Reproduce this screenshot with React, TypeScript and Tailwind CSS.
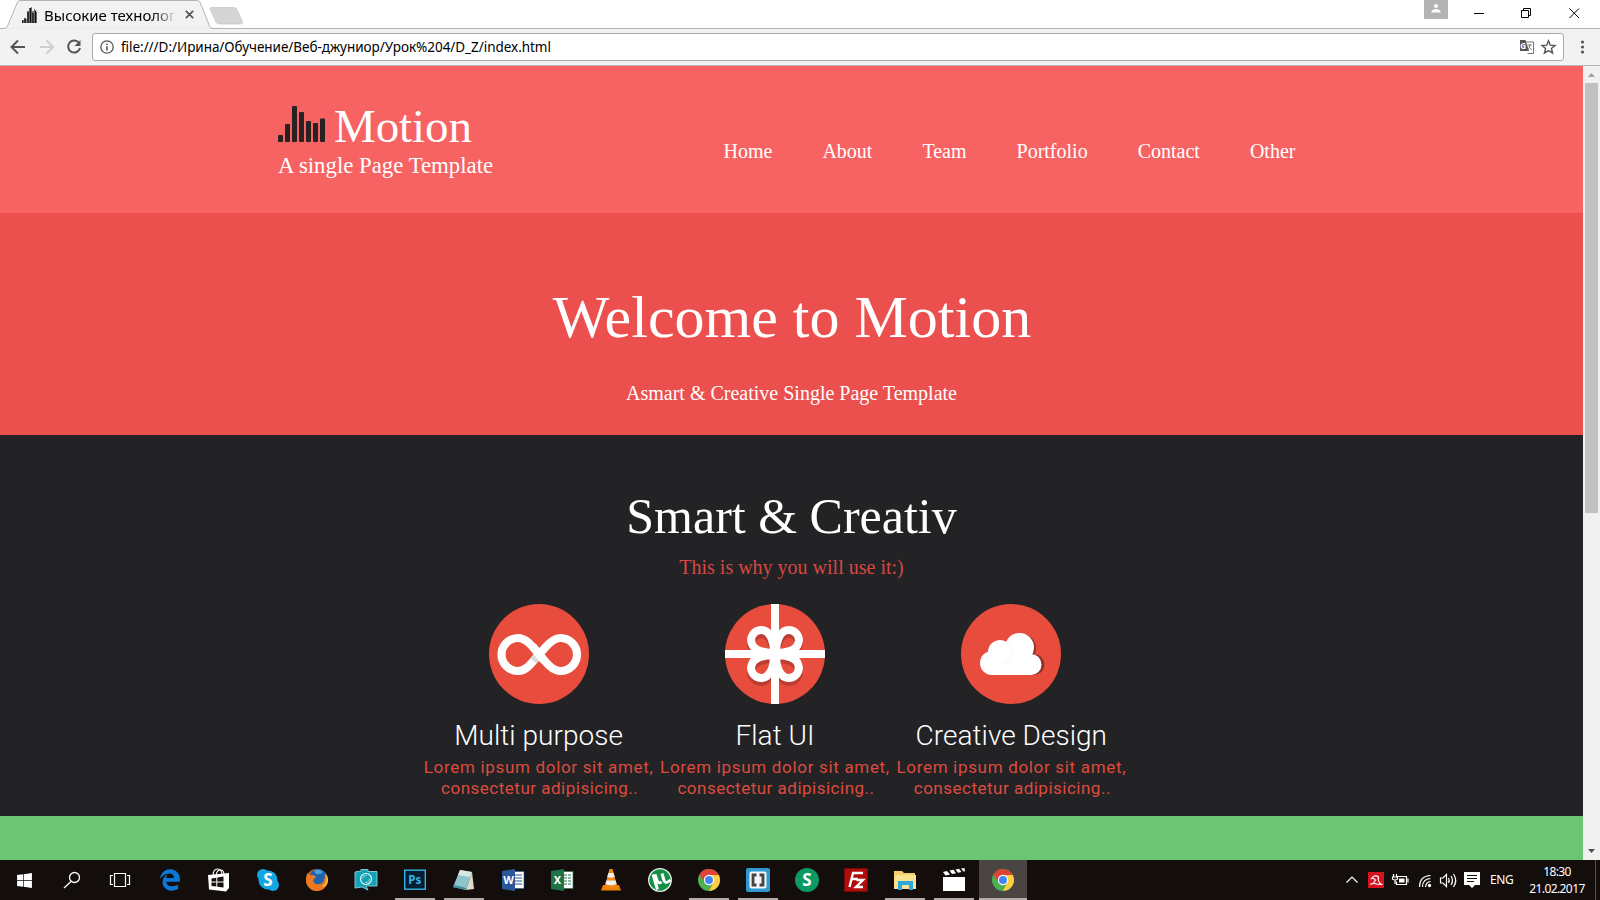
import type { ReactNode } from "react";
import { FaWindows, FaEdgeLegacy } from "react-icons/fa6";

const navItems = ["Home", "About", "Team", "Portfolio", "Contact", "Other"];

function Bars({ className, color }: { className: string; color: string }) {
  const bars = [
    [0, 29, 7],
    [7, 18, 18],
    [14, 0, 36],
    [21, 6, 30],
    [28, 15, 21],
    [35, 17, 19],
    [42, 12.5, 23.5],
  ];
  return (
    <svg className={className} viewBox="0 0 47 36" fill={color}>
      {bars.map(([x, y, h]) => (
        <rect key={x} x={x} y={y} width="5" height={h} rx="1" />
      ))}
    </svg>
  );
}

function Favicon() {
  return (
    <svg className="ml-[22px] h-[16px] w-[16px]" viewBox="0 0 16 16">
      <path d="M0 16V13H2V11H4V12H5V4H7V1H9V0H10V4H12V2H13V5H15V16Z" fill="#777" />
      <path d="M.5 16V13.500M3 16V11.500M6 16V5M8.500 16V1M11 16V6M13.500 16V3.500" stroke="#111" strokeWidth="1.300" />
    </svg>
  );
}

function Browser() {
  return (
    <div className="h-[66px] shrink-0 bg-[#f2f2f2] font-['Noto_Sans','Open_Sans',sans-serif] text-black">
      <div className="flex h-[29px] items-start justify-between border-b border-[#b4b4b4] bg-white">
        <div className="relative flex h-[29px] items-center">
          <svg className="absolute left-0 top-0 h-[29px] w-[250px]" viewBox="0 0 250 29">
            <path d="M0 28.5H5Q7 28 8 25L17.500 2Q18 .5 20 .5H197Q199 .5 200 2L209.500 26Q210.500 28.500 213 28.500" fill="#f2f2f2" stroke="#b4b4b4" />
            <path d="M6 29H211" stroke="#f2f2f2" strokeWidth="1.600" />
            <path d="M211 7.500H234Q236 7.500 237 9.500L242.500 22Q243 24 241 24H219Q217 24 216 22L210 9Q209.500 7.500 211 7.500Z" fill="#d5d5d5" stroke="#c4c4c4" strokeWidth=".7" />
          </svg>
          <div className="relative flex items-center">
            <Favicon />
            <span className="ml-[6px] w-[131px] overflow-hidden whitespace-nowrap bg-gradient-to-r from-black from-80% to-[#e4e4e4] bg-clip-text text-[15px] leading-[20px] text-transparent">
              Высокие технолог
            </span>
            <svg className="ml-[10px] size-[9px]" viewBox="0 0 9 9" stroke="#555" strokeWidth="1.700">
              <path d="M.8.8L8.200 8.200M8.200.8L.8 8.200" />
            </svg>
          </div>
        </div>
        <div className="flex h-[28px] items-center">
          <div className="flex h-[19px] w-[24px] justify-center self-start bg-[#b3b3b3] pt-[4px]">
            <svg className="h-[9px] w-[10px]" viewBox="0 0 10 9" fill="#fff">
              <circle cx="5" cy="2" r="2" />
              <path d="M.5 8.500V7Q2 5 5 5T9.500 7V8.500Z" />
            </svg>
          </div>
          <svg className="h-[28px] w-[152px]" viewBox="0 0 152 28" fill="none" stroke="#000" strokeWidth="1">
            <path d="M26 13.500h10M73.500 10.500h7v7h-7zM75.500 10V8.500h7v7H81M121.500 8.500l9.500 9.500M131 8.500l-9.500 9.500" />
          </svg>
        </div>
      </div>
      <div className="flex h-[37px] items-center border-b border-[#b6b4b4]">
        <svg className="h-[36px] w-[92px]" viewBox="0 0 92 36" fill="none" stroke="#555" strokeWidth="2">
          <path d="M25 18H12M18 11.500L11.500 18L18 24.500" />
          <path d="M40 18H52.500M46.500 11.500L53 18L46.500 24.500" stroke="#cfcfcf" />
          <path d="M79 14A6 6 0 1 0 80 19" />
          <path d="M80.500 11V17H74.500Z" fill="#555" stroke="none" />
        </svg>
        <div className="flex h-[28px] w-[1472px] items-center rounded-[3px] border border-[#a9a9a9] bg-white">
          <svg className="ml-[7px] size-[14px]" viewBox="0 0 14 14" fill="none" stroke="#555" strokeWidth="1.300">
            <circle cx="7" cy="7" r="6.200" />
            <path d="M7 6.200V10.500M7 3.500V5" strokeWidth="1.600" />
          </svg>
          <span className="ml-[7px] whitespace-nowrap text-[13.5px] leading-[20px] tracking-[-0.04px]">
            file:///D:/Ирина/Обучение/Веб-джуниор/Урок%204/D_Z/index.html
          </span>
          <svg className="ml-auto h-[16px] w-[44px]" viewBox="0 0 44 16">
            <path d="M5 3H14.500V14.500H8.500" fill="#fff" stroke="#777" />
            <path d="M1 1H6.500L10 12H1Z" fill="#555" />
            <text x="1.200" y="9.500" fontSize="8" fill="#fff" fontWeight="bold">G</text>
            <path d="M8.500 6H13M11 5V6Q11 9 8.500 11M9.500 7.500L13 11" stroke="#777" fill="none" strokeWidth=".9" />
            <path d="M29.500 1.800L31.300 6.200L36 6.500L32.400 9.500L33.600 14.100L29.500 11.600L25.400 14.100L26.600 9.500L23 6.500L27.700 6.200Z" fill="none" stroke="#555" strokeWidth="1.400" />
          </svg>
        </div>
        <svg className="ml-[16px] h-[14px] w-[6px]" viewBox="0 0 6 14" fill="#555">
          <circle cx="2.500" cy="2" r="1.600" />
          <circle cx="2.500" cy="7" r="1.600" />
          <circle cx="2.500" cy="12" r="1.600" />
        </svg>
      </div>
    </div>
  );
}

function InfinityIcon() {
  return (
    <svg className="size-[100px]" viewBox="0 0 100 100">
      <circle cx="50" cy="50" r="50" fill="#e74c3c" />
      <g fill="none" stroke="#fff" strokeWidth="8.200">
        <path d="M50 50C42 41 37 34 29 34A16.500 16.500 0 0 0 29 67C37 67 42 60 50 50" />
        <path d="M44.500 57L48.500 52" stroke="#dcdcdc" />
        <path d="M46 45.500L50 50C58 60 64 67 71.500 67A16.500 16.500 0 0 0 71.500 34C64 34 58 41 48 53" />
        <path d="M43.500 42L55 56.500" />
      </g>
    </svg>
  );
}

function Gift() {
  const petal = "M49 49C49 35 44 26 36 26A10 10 0 0 0 27 40C29 46 38 49 49 49Z";
  const petals = (
    <>
      <path d={petal} />
      <path d={petal} transform="matrix(-1 0 0 1 100 0)" />
      <path d={petal} transform="matrix(1 0 0 -1 0 100)" />
      <path d={petal} transform="matrix(-1 0 0 -1 100 100)" />
    </>
  );
  return (
    <svg className="size-[100px]" viewBox="0 0 100 100">
      <circle cx="50" cy="50" r="50" fill="#e74c3c" />
      <g fill="none" strokeWidth="8">
        <g stroke="#bd3e31" transform="translate(0 4)">{petals}</g>
        <g stroke="#fff">{petals}</g>
        <path d="M50 0V100M0 50H100" stroke="#fff" />
      </g>
    </svg>
  );
}

function CloudIcon() {
  const shape = (
    <>
      <circle cx="58.500" cy="43.500" r="14.500" />
      <circle cx="39" cy="48" r="12" />
      <circle cx="31" cy="59" r="12" />
      <circle cx="70" cy="60.500" r="10.500" />
      <path d="M31 48H60L70 55V71H31Z" />
    </>
  );
  return (
    <svg className="size-[100px]" viewBox="0 0 100 100">
      <circle cx="50" cy="50" r="50" fill="#e74c3c" />
      <g fill="#913329">
        <circle cx="60.500" cy="44.500" r="14.500" />
        <circle cx="73" cy="60.500" r="10.500" />
      </g>
      <g fill="#fff">{shape}</g>
      <path d="M46 38Q53 44 50 52Q48 57 42 59" fill="none" stroke="#f8f8fa" strokeWidth="1.500" />
    </svg>
  );
}

function Feature({ icon, title }: { icon: ReactNode; title: string }) {
  return (
    <div className="flex flex-col items-center font-['Roboto',sans-serif]">
      {icon}
      <h3 className="mt-[14px] whitespace-nowrap text-[28px] font-[350] leading-[36px] tracking-[0.03px] text-white">{title}</h3>
      <p className="whitespace-nowrap pt-[3px] text-center text-[17px] leading-[21px] tracking-[0.68px] text-[#dd4b3f]">
        Lorem ipsum dolor sit amet,
        <br />
        <span className="pl-[2px] tracking-[0.5px]">consectetur adipisicing..</span>
      </p>
    </div>
  );
}

function Page() {
  return (
    <div className="flex h-[794px] shrink-0">
      <main className="flex w-[1583px] flex-col font-['Liberation_Serif',serif] text-white">
        <header className="flex h-[147px] shrink-0 bg-[#f76363]">
          <div className="ml-[278px] w-[445.5px] pt-[34px]">
            <div className="flex h-[51px]">
              <Bars className="mt-[6px] h-[36px] w-[47px]" color="#2a2123" />
              <span className="ml-[9px] text-[47px] leading-[52px] tracking-[-0.1px]">Motion</span>
            </div>
            <p className="whitespace-nowrap text-[22.8px] leading-[30px]">A single Page Template</p>
          </div>
          <nav className="flex gap-[50px] pt-[73px] text-[20px] leading-[24px]">
            {navItems.map((item) => (
              <span key={item}>{item}</span>
            ))}
          </nav>
        </header>
        <section className="flex h-[222px] shrink-0 flex-col items-center bg-[#eb504e]">
          <h1 className="ml-px mt-[69px] text-[60px] leading-[70px]">Welcome to Motion</h1>
          <p className="mt-[29px] text-[20px] leading-[24px]">Asmart &amp; Creative Single Page Template</p>
        </section>
        <section className="flex h-[381px] shrink-0 flex-col items-center bg-[#232325]">
          <h2 className="mt-[52px] text-[50px] leading-[58px]">Smart &amp; Creativ</h2>
          <p className="mt-[10px] text-[20px] leading-[24px] text-[#d94644]">This is why you will use it:)</p>
          <div className="mr-[33px] mt-[25px] grid w-[709px] grid-cols-3">
            <Feature icon={<InfinityIcon />} title="Multi purpose" />
            <Feature icon={<Gift />} title="Flat UI" />
            <Feature icon={<CloudIcon />} title="Creative Design" />
          </div>
        </section>
        <section className="grow bg-[#6dc574]" />
      </main>
      <div className="flex w-[17px] flex-col items-center bg-[#f1f1f1]">
        <svg className="h-[17px] w-[17px]" viewBox="0 0 17 17">
          <path d="M5 11L8.500 7L12 11Z" fill="#a3a3a3" />
        </svg>
        <div className="h-[430px] w-[13px] bg-[#c1c1c1]" />
        <svg className="mt-auto h-[17px] w-[17px]" viewBox="0 0 17 17">
          <path d="M5 6L8.500 10L12 6Z" fill="#505050" />
        </svg>
      </div>
    </div>
  );
}

function Glyph({ children }: { children: ReactNode }) {
  return (
    <svg className="size-[24px]" viewBox="0 0 24 24">
      {children}
    </svg>
  );
}

const chrome = (
  <Glyph>
    <circle cx="12" cy="12" r="11" fill="#4caf50" />
    <path d="M12 7H21.800A11 11 0 0 1 12 23L16.500 14Z" fill="#ffcd40" />
    <path d="M2.500 6.500A11 11 0 0 1 21.700 7H12L7.500 14.500Z" fill="#db4437" />
    <circle cx="12" cy="12" r="5.200" fill="#fff" />
    <circle cx="12" cy="12" r="4" fill="#4285f4" />
  </Glyph>
);

const officeIcon = (letter: string, color: string, light: boolean) => (
  <Glyph>
    <rect x="11" y="3.500" width="12" height="17" fill="#fff" stroke={color} strokeWidth=".7" />
    <path d="M13 7h8M13 10h8M13 13h8M13 16h8" stroke={color} strokeWidth="1.200" />
    {light && <path d="M17.500 5v14" stroke="#fff" />}
    <path d="M1 3L14 1V23L1 21Z" fill={color} />
    <text x="7.500" y="16" textAnchor="middle" fontSize="11" fontWeight="bold" fill="#fff">{letter}</text>
  </Glyph>
);

const apps: { name: string; icon: ReactNode; open?: boolean; active?: boolean }[] = [
  { name: "edge", icon: <FaEdgeLegacy className="size-[22px] text-[#0b78d7]" /> },
  {
    name: "store",
    icon: (
      <Glyph>
        <path d="M6 8Q6 1 10.500 1T15 7M9 7Q10 2 13.500 2T17 7" fill="none" stroke="#fff" strokeWidth="1.100" />
        <path d="M1 7L22 5V20L19 23.500L2 21.500Z" fill="#fff" />
        <path d="M4.500 10.500L9.300 9.700V13.500H4.500ZM10.300 9.500L16.500 8.500V13.500H10.300ZM4.500 14.500H9.300V18.500L4.500 18ZM10.300 14.500H16.500V19.500L10.300 18.700Z" fill="#16100f" />
      </Glyph>
    ),
  },
  {
    name: "skype",
    icon: (
      <Glyph>
        <circle cx="12" cy="12" r="9.500" fill="#14a5e3" />
        <circle cx="7" cy="7" r="6" fill="#14a5e3" />
        <circle cx="17" cy="17" r="6" fill="#14a5e3" />
        <text x="12" y="18" textAnchor="middle" fontSize="17" fontWeight="bold" fill="#fff">S</text>
      </Glyph>
    ),
  },
  {
    name: "firefox",
    icon: (
      <Glyph>
        <circle cx="12" cy="12" r="11" fill="#e66a16" />
        <circle cx="13" cy="10" r="9" fill="#1d63b0" />
        <path d="M9 3Q14 0 18 4Q15 7 11 6Z" fill="#48a2d8" />
        <path d="M2 5Q3 7 6 7Q11 7 11 9L8 12Q9 17 14 16Q20 16 20 6Q24 11 22 16Q18 23 11 23Q1 21 1 12Z" fill="#ed7821" />
        <path d="M20 5Q24 13 17 19Q22 19 23 12Q23 8 20 5Z" fill="#fbc439" />
      </Glyph>
    ),
  },
  {
    name: "camera",
    icon: (
      <Glyph>
        <path d="M1 4L7 3V1.500H14V3.500H23V18H12L14 22L8 19L1 20Z" fill="#12a1b5" stroke="#8bd3dc" strokeWidth=".9" />
        <circle cx="12" cy="11" r="5.500" fill="#12a1b5" stroke="#fff" strokeWidth="1.100" />
        <circle cx="12" cy="11" r="3.500" fill="none" stroke="#9edbe2" strokeDasharray="6 5" />
      </Glyph>
    ),
  },
  {
    name: "photoshop",
    open: true,
    icon: (
      <Glyph>
        <rect x="1.700" y="2.200" width="20.600" height="19" fill="#071d31" stroke="#34b5e5" strokeWidth="1.400" />
        <text x="11.800" y="16" textAnchor="middle" fontSize="11.500" fontWeight="bold" fill="#34b5e5">Ps</text>
      </Glyph>
    ),
  },
  {
    name: "notepad",
    open: true,
    icon: (
      <Glyph>
        <path d="M8 2L20 4L14 22L1 19Z" fill="#8fc4cd" />
        <path d="M8 2L20 4L18 9L6 7Z" fill="#d9e8e5" />
        <path d="M20 4L22 21L14 22Z" fill="#dcdccb" />
        <path d="M2 17L14.500 20L14 22L1 19Z" fill="#3f929f" />
      </Glyph>
    ),
  },
  { name: "word", icon: officeIcon("W", "#2b579a", false) },
  { name: "excel", icon: officeIcon("X", "#217346", true) },
  {
    name: "vlc",
    icon: (
      <Glyph>
        <path d="M4 17H20L22 22.500H2Z" fill="#ed8200" />
        <path d="M10.500 1H13.500L18.500 19Q12 22 5.500 19Z" fill="#f08916" />
        <path d="M9.400 5H14.600L15.800 9Q12 10.500 8.200 9ZM7.400 12.500H16.600L17.600 16Q12 18.500 6.400 16Z" fill="#f0efed" />
      </Glyph>
    ),
  },
  {
    name: "utorrent",
    icon: (
      <Glyph>
        <circle cx="12" cy="12" r="11.300" fill="#149044" stroke="#e8f0eb" strokeWidth="1.300" />
        <path d="M5 6.500L9.500 21.500M7 6.500L9 12.500Q10 16 13.500 14M14 5.500L16 12.500Q17.500 16.500 22.500 12" stroke="#fff" strokeWidth="3" fill="none" />
      </Glyph>
    ),
  },
  { name: "chrome", open: true, icon: chrome },
  {
    name: "brackets",
    open: true,
    icon: (
      <Glyph>
        <rect width="24" height="24" rx="2" fill="#2e98d0" />
        <rect x="3.500" y="3.500" width="17" height="17" rx="2" fill="#f5f5f5" />
        <path d="M10.500 7H7V17H10.500M13.500 7H17V17H13.500" fill="none" stroke="#444" strokeWidth="2.800" />
      </Glyph>
    ),
  },
  {
    name: "s-client",
    icon: (
      <Glyph>
        <circle cx="12" cy="12" r="12" fill="#0b9963" />
        <text x="12" y="18" textAnchor="middle" fontSize="17" fontWeight="bold" fill="#fff">S</text>
      </Glyph>
    ),
  },
  {
    name: "filezilla",
    icon: (
      <Glyph>
        <rect x=".5" y=".5" width="23" height="23" fill="#b10c0c" stroke="#7e0808" strokeDasharray="2 1" />
        <path d="M5.500 19L9 5H19M7.500 11H14M12.500 12H19L12 19H19" fill="none" stroke="#fff" strokeWidth="2.400" />
      </Glyph>
    ),
  },
  {
    name: "explorer",
    open: true,
    icon: (
      <Glyph>
        <path d="M1 3H9L11 5H22V20H1Z" fill="#f5cf68" />
        <path d="M2 7H23V21H1Z" fill="#fbe192" />
        <path d="M5 13H20V22H16V17H9V22H5Z" fill="#2fa9dc" />
      </Glyph>
    ),
  },
  {
    name: "movies",
    open: true,
    icon: (
      <Glyph>
        <rect x="1" y="9" width="22" height="14" fill="#fff" />
        <path d="M1 4L5 3L8 6.500L3.500 7.500ZM7.500 2.500L11.500 1.800L14 5.300L10 6ZM13.500 1.500L17 .8L19.500 4L16 4.800ZM19 .5L22.500 0L23 3.300L21.500 3.600Z" fill="#fff" />
      </Glyph>
    ),
  },
  { name: "chrome-active", open: true, active: true, icon: chrome },
];

function Taskbar() {
  return (
    <div className="flex h-[40px] shrink-0 bg-[#130d0c] font-['Noto_Sans','Open_Sans',sans-serif] text-white">
      <div className="flex w-[145px] items-center">
        <div className="flex w-[48px] justify-center">
          <FaWindows className="size-[17px]" />
        </div>
        <svg className="h-[40px] w-[48px]" viewBox="0 0 48 40" fill="none" stroke="#fff" strokeWidth="1.300">
          <circle cx="26.500" cy="17.500" r="5" />
          <path d="M23 21.500L16 28" />
        </svg>
        <svg className="h-[40px] w-[48px]" viewBox="0 0 48 40" fill="none" stroke="#fff" strokeWidth="1.200">
          <path d="M18.500 13.500H29.500V26.500H18.500ZM17 15.500H14.500V24.500H17M31 15.500H33.500V24.500H31" />
        </svg>
      </div>
      {apps.map((app) => (
        <div
          key={app.name}
          className={`flex flex-col items-center justify-between pt-[8px] ${app.active ? "ml-px w-[48px] bg-[#4a4443]" : "w-[49px]"}`}
        >
          <div className="flex size-[24px] items-center justify-center">{app.icon}</div>
          <div className={`h-[2px] ${app.active ? "w-full" : "w-[40px]"} ${app.open ? "bg-[#b2aaaa]" : ""}`} />
        </div>
      ))}
      <div className="ml-auto flex items-center">
        <svg className="h-[40px] w-[142px]" viewBox="1342 0 142 40" fill="none" stroke="#fff" strokeWidth="1.200">
          <path d="M1346.500 22.500L1352 17L1357.500 22.500" />
          <rect x="1368" y="12" width="16" height="16" fill="#d7131f" stroke="none" />
          <path d="M1370.500 24.500Q1372 23 1374.500 23.500Q1377 24.500 1381.500 24.500Q1377 21 1378.500 17Q1375 14 1371.500 18.500Q1374 18 1375.500 20L1373.500 23" strokeWidth="1.200" />
          <path d="M1397 16.500H1406.500V24.500H1396.500V21.500M1408 18.500V22.500M1393.500 14V17M1396.500 14V17M1392.500 17H1397.500V19Q1395 21 1392.500 19ZM1395 20V24" />
          <path d="M1399 18.500H1404.500V22.500H1399Z" fill="#fff" stroke="none" />
          <path d="M1419.500 27Q1419.500 16 1430.500 15.500M1422.500 27Q1422.500 19 1430.500 18.500M1425.500 27Q1426 22 1430.500 21.500" />
          <circle cx="1429.500" cy="25.500" r="1.700" fill="#fff" stroke="none" />
          <path d="M1440.500 18H1443L1446.500 14.500V26.500L1443 23H1440.500ZM1448.500 18Q1450 20.500 1448.500 23M1451 16Q1454 20.500 1451 25M1453.500 14Q1458 20.500 1453.500 27" />
          <path d="M1464 12H1480V25H1475L1472 28L1469 25H1464Z" fill="#fff" stroke="none" />
          <path d="M1467 15.500H1477M1467 18.500H1477M1467 21.500H1474" stroke="#130d0c" />
        </svg>
        <span className="ml-[6px] w-[24px] whitespace-nowrap text-[12px] leading-[16px] tracking-[-0.4px]">ENG</span>
        <div className="ml-[13px] w-[60px] whitespace-nowrap pb-px text-center text-[12px] leading-[17px] tracking-[-0.6px]">
          <div>18:30</div>
          <div>21.02.2017</div>
        </div>
        <div className="ml-[8px] mr-[4px] h-[40px] w-px bg-[#55504f]" />
      </div>
    </div>
  );
}

export default function App() {
  return (
    <div className="flex h-[900px] w-[1600px] flex-col overflow-hidden">
      <Browser />
      <Page />
      <Taskbar />
    </div>
  );
}
